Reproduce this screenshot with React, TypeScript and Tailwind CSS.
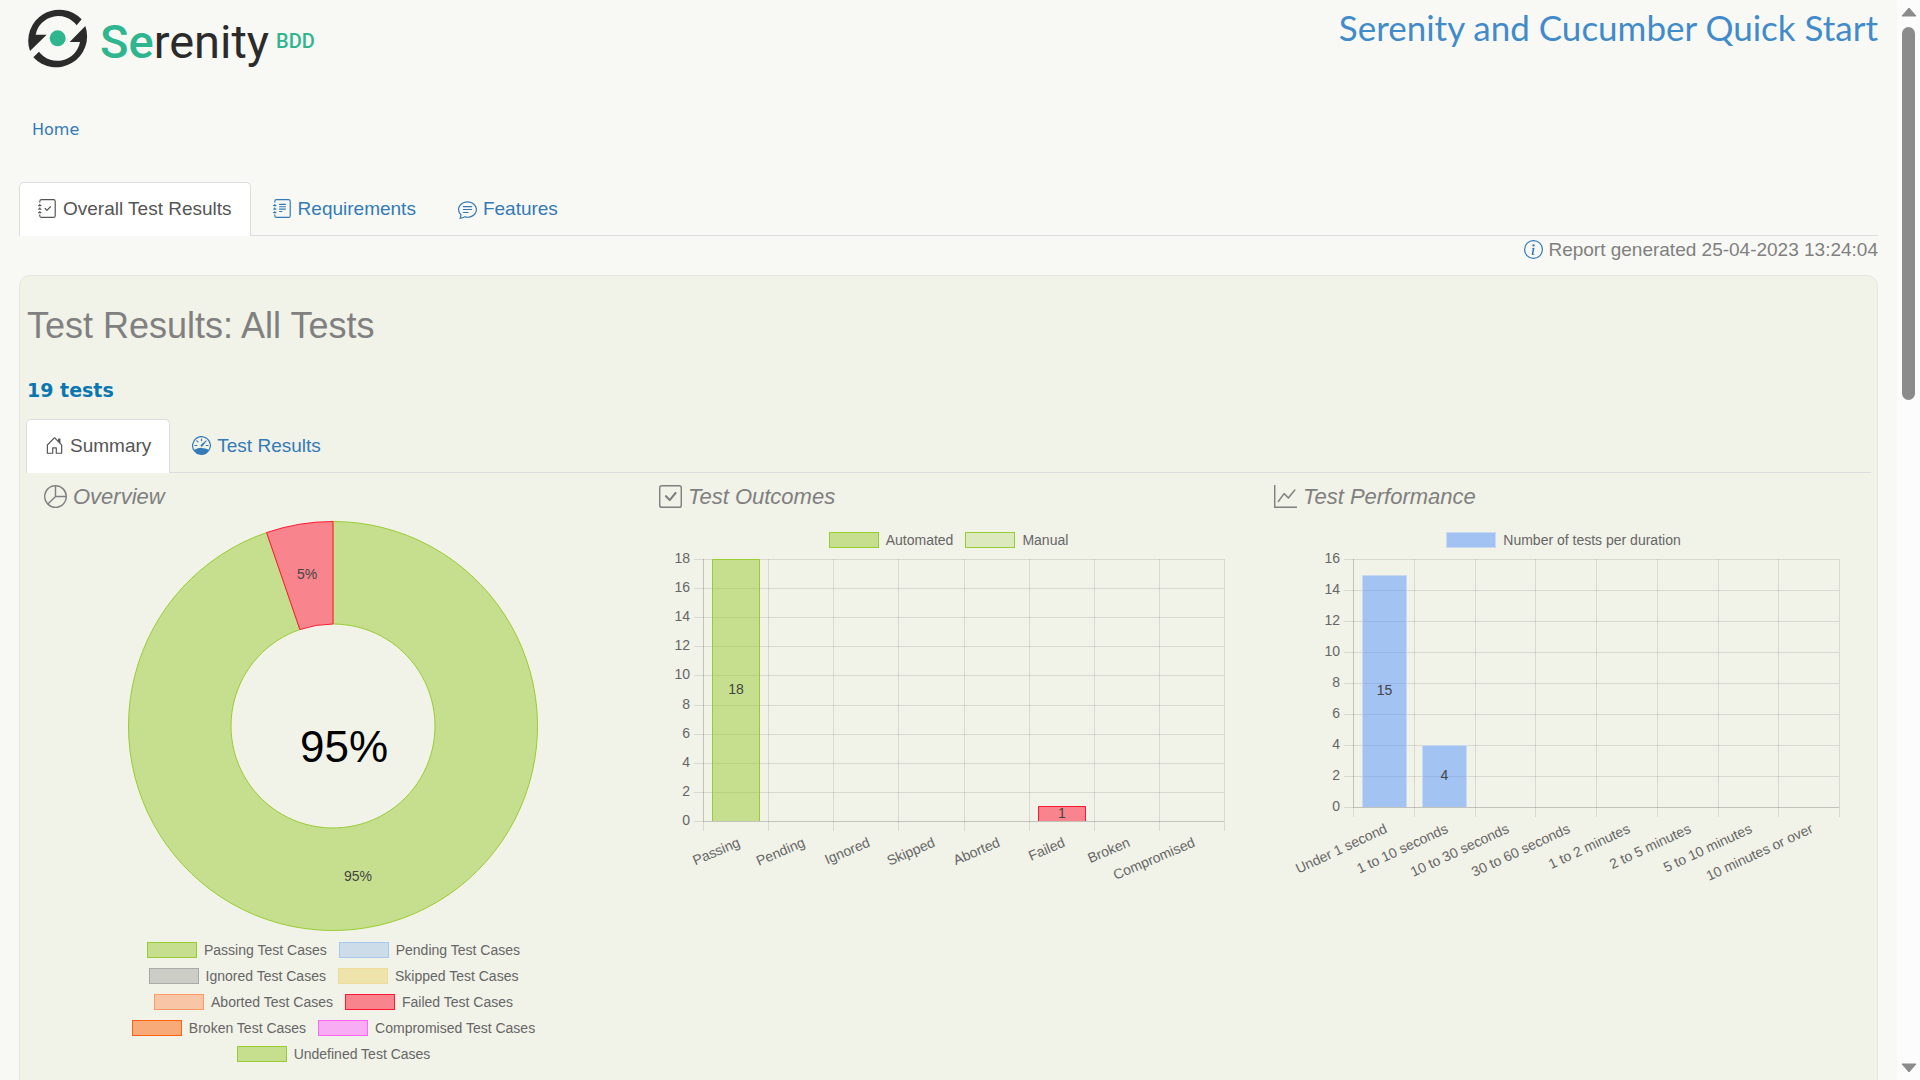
import type { ReactNode } from 'react';
import {
  BsJournalCheck,
  BsJournalText,
  BsChatText,
  BsInfoCircle,
  BsHouseDoor,
  BsSpeedometer,
  BsPieChart,
  BsCheckSquare,
  BsGraphUp,
} from 'react-icons/bs';

type Bar = { index: number; value: number; fill: string; stroke: string };

type BarChartProps = {
  label: string;
  left: number;
  right: number;
  max: number;
  bottom: number;
  height: number;
  angle: number;
  categories: string[];
  bars: Bar[];
};

const CHART_TOP = 10;

function BarChart({ label, left, right, max, bottom, height, angle, categories, bars }: BarChartProps) {
  const step = (right - left) / categories.length;
  const yOf = (value: number) => Math.round(bottom - ((bottom - CHART_TOP) * value) / max);
  const ticks = Array.from({ length: max / 2 + 1 }, (_, i) => i * 2);
  const barWidth = step * 0.72;
  return (
    <svg viewBox={`0 0 579 ${height}`} className="block w-full overflow-visible" role="img" aria-label={label}>
      <g strokeWidth="1" stroke="#000" strokeOpacity="0.1" shapeRendering="crispEdges">
        {ticks.map((t) => (
          <line key={t} x1={left - 9} x2={right} y1={yOf(t) + 0.5} y2={yOf(t) + 0.5} />
        ))}
        {Array.from({ length: categories.length + 1 }, (_, i) => {
          const x = Math.round(left + i * step) + 0.5;
          return <line key={i} x1={x} x2={x} y1={CHART_TOP} y2={bottom + 10} />;
        })}
        <line x1={left + 0.5} x2={left + 0.5} y1={CHART_TOP} y2={bottom} />
        <line x1={left} x2={right} y1={bottom + 0.5} y2={bottom + 0.5} />
      </g>
      <g fontSize="14" fill="#666">
        {ticks.map((t) => (
          <text key={t} x={left - 13} y={yOf(t) + 4} textAnchor="end">
            {t}
          </text>
        ))}
        {categories.map((c, i) => {
          const x = Math.round(left + (i + 0.5) * step) + 5;
          const y = bottom + 25;
          return (
            <text key={c} x={x} y={y} textAnchor="end" transform={`rotate(${-angle} ${x} ${y})`}>
              {c}
            </text>
          );
        })}
      </g>
      {bars.map((b) => {
        const x = Math.round(left + b.index * step + step * 0.14) + 0.5;
        const y = yOf(b.value) + 0.5;
        const w = Math.round(barWidth);
        return (
          <g key={b.index}>
            <rect x={x} y={y} width={w} height={bottom - y} fill={b.fill} fillOpacity="0.5" />
            <path d={`M${x} ${bottom}V${y}h${w}V${bottom}`} fill="none" stroke={b.stroke} />
            <text x={x + w / 2} y={(y + bottom) / 2 + 4} fontSize="14" fill="#444" textAnchor="middle">
              {b.value}
            </text>
          </g>
        );
      })}
    </svg>
  );
}

function Donut() {
  const cx = 289;
  const cy = 205;
  const R = 204.5;
  const r = 102;
  const a = (Math.PI * 2) / 19;
  const ox = cx - R * Math.sin(a);
  const oy = cy - R * Math.cos(a);
  const ix = cx - r * Math.sin(a);
  const iy = cy - r * Math.cos(a);
  return (
    <svg viewBox="0 0 579 411" className="block w-full" role="img" aria-label="Overview of test results">
      <path
        d={`M${cx} ${cy - R}A${R} ${R} 0 1 1 ${ox} ${oy}L${ix} ${iy}A${r} ${r} 0 1 0 ${cx} ${cy - r}Z`}
        fill="#c6df8e"
        stroke="#99cc33"
      />
      <path
        d={`M${ox} ${oy}A${R} ${R} 0 0 1 ${cx} ${cy - R}V${cy - r}A${r} ${r} 0 0 0 ${ix} ${iy}Z`}
        fill="#f8858d"
        stroke="#ff1631"
      />
      <g fontSize="14" fill="#444" textAnchor="middle">
        <text x="263" y="58">5%</text>
        <text x="314" y="360">95%</text>
      </g>
      <text x="300" y="241" fontSize="44" textAnchor="middle">95%</text>
    </svg>
  );
}

function LegendItem({ swatch, children }: { swatch: string; children: ReactNode }) {
  return (
    <li className="flex items-center gap-[7px]">
      <span className={`h-4 w-[50px] border ${swatch}`} />
      {children}
    </li>
  );
}

const overviewLegend: { name: string; swatch: string }[][] = [
  [
    { name: 'Passing', swatch: 'border-[#99cc33] bg-[#c6df8e]' },
    { name: 'Pending', swatch: 'border-[#a8c9f0] bg-[#ccdde9]' },
  ],
  [
    { name: 'Ignored', swatch: 'border-[#a8a8a8] bg-[#cccdc7]' },
    { name: 'Skipped', swatch: 'border-[#eedc9a] bg-[#eee4ab]' },
  ],
  [
    { name: 'Aborted', swatch: 'border-[#ff9966] bg-[#f8c5a7]' },
    { name: 'Failed', swatch: 'border-[#ff1631] bg-[#f8858d]' },
  ],
  [
    { name: 'Broken', swatch: 'border-[#ff6210] bg-[#f8aa79]' },
    { name: 'Compromised', swatch: 'border-[#ff66ff] bg-[#f8acf3]' },
  ],
  [{ name: 'Undefined', swatch: 'border-[#99cc33] bg-[#c6df8e]' }],
];

function Tab({ icon, active, children }: { icon: ReactNode; active?: boolean; children: ReactNode }) {
  return (
    <button
      role="tab"
      aria-selected={!!active}
      className={
        active
          ? '-mb-px flex h-[54px] items-center gap-[6px] rounded-t-[5px] border border-b-0 border-[#ddd] bg-white px-[18px] text-[#555]'
          : '-mb-px flex h-[54px] items-center gap-[6px] px-[20px] text-[#337ab7]'
      }
    >
      {icon}
      {children}
    </button>
  );
}

function SectionTitle({ icon, children }: { icon: ReactNode; children: ReactNode }) {
  return (
    <h3 className="flex h-[46px] items-center gap-[6px] text-[22px] text-[#808080] italic">
      {icon}
      {children}
    </h3>
  );
}

function Logo() {
  return (
    <a href="#" aria-label="Serenity BDD" className="flex items-start pt-[6px]">
      <svg viewBox="15 18 195 195" className="size-[65px]" aria-hidden="true">
        <path d="M185 58A93 93 0 0 0 30 153L80 104H47A69 69 0 0 1 170 76Z" fill="#2b2b2b" />
        <path d="M40 172A93 93 0 0 0 196 78L149 126H180A69 69 0 0 1 57 155Z" fill="#2b2b2b" />
        <circle cx="113" cy="115" r="24" fill="#30b68f" />
      </svg>
      <span className="ml-[10px] pt-2 font-['Roboto'] text-[47px] leading-[56px] text-[#2b2b2b]">
        <span className="font-medium text-[#30b68f]">Se</span>renity
      </span>
      <span className="ml-[7px] pt-[23px] font-['Roboto'] text-[20px] leading-6 font-medium text-[#30b68f]">BDD</span>
    </a>
  );
}

export default function App() {
  return (
    <div className="flex h-screen overflow-hidden bg-[#f8f9f4] font-['Liberation_Sans',Arial,sans-serif]">
      <main className="min-w-0 flex-1 overflow-hidden px-[19px]">
        <header className="flex h-[104px] justify-between pl-[6px]">
          <Logo />
          <h1 className="pt-[5px] font-['Lato'] text-[35px] leading-[44px] text-[#428bca]">
            Serenity and Cucumber Quick Start
          </h1>
        </header>
        <nav aria-label="Breadcrumb" className="flex h-[50px] items-center pt-[2px] pl-[13px] font-['DejaVu_Sans'] text-[16px]">
          <a href="#" className="text-[#337ab7]">
            Home
          </a>
        </nav>
        <div role="tablist" className="mt-7 flex gap-[2px] border-b border-[#ddd] text-[19px]">
          <Tab active icon={<BsJournalCheck className="mb-[2px] size-[19px]" />}>
            Overall Test Results
          </Tab>
          <Tab icon={<BsJournalText className="mb-[2px] size-[19px]" />}>Requirements</Tab>
          <Tab icon={<BsChatText className="size-[19px]" />}>Features</Tab>
        </div>
        <p className="flex h-[39px] items-start justify-end gap-[5px] pt-[2px] text-[19px] leading-6 text-[#808080]">
          <BsInfoCircle className="mt-[2px] size-[19px] text-[#337ab7]" />
          Report generated 25-04-2023 13:24:04
        </p>
        <section className="min-h-[900px] rounded-[11px] border border-[#e6e7de] bg-[#f1f2e8] px-[6px] pt-[29px]">
          <h2 className="pl-px text-[36px] leading-[42px] text-[#808080]">Test Results: All Tests</h2>
          <p className="mt-[31px] pl-px font-['DejaVu_Sans'] text-[19px] leading-6 font-bold text-[#0a77b0]">
            19 tests
          </p>
          <div role="tablist" className="mt-[17px] flex gap-[2px] border-b border-[#ddd] text-[19px]">
            <Tab active icon={<BsHouseDoor className="mb-[2px] size-[19px]" />}>
              Summary
            </Tab>
            <Tab icon={<BsSpeedometer className="mb-[2px] size-[19px]" />}>Test Results</Tab>
          </div>
          <div className="grid grid-cols-3">
            <article className="px-[18px]">
              <SectionTitle icon={<BsPieChart className="size-[23px]" />}>Overview</SectionTitle>
              <div className="mt-[2px]">
                <Donut />
              </div>
              <div className="flex flex-col gap-[2px] pt-[6px] text-[14px] leading-6 text-[#666]">
                {overviewLegend.map((row) => (
                  <ul key={row[0].name} className="flex justify-center gap-3">
                    {row.map((item) => (
                      <LegendItem key={item.name} swatch={item.swatch}>
                        {item.name} Test Cases
                      </LegendItem>
                    ))}
                  </ul>
                ))}
              </div>
            </article>
            <article className="px-[18px]">
              <SectionTitle icon={<BsCheckSquare className="size-[23px]" />}>Test Outcomes</SectionTitle>
              <ul className="mt-[12px] flex justify-center gap-3 text-[14px] leading-[18px] text-[#666]">
                <LegendItem swatch="border-[#99cc33] bg-[#c6df8e]">Automated</LegendItem>
                <LegendItem swatch="border-[#99cc33] bg-[#dce9bc]">Manual</LegendItem>
              </ul>
              <BarChart
                label="Test outcomes"
                left={44}
                right={565}
                max={18}
                bottom={272}
                height={340}
                angle={23}
                categories={['Passing', 'Pending', 'Ignored', 'Skipped', 'Aborted', 'Failed', 'Broken', 'Compromised']}
                bars={[
                  { index: 0, value: 18, fill: '#99cc33', stroke: '#99cc33' },
                  { index: 5, value: 1, fill: '#ff1631', stroke: '#ff1631' },
                ]}
              />
            </article>
            <article className="px-[18px]">
              <SectionTitle icon={<BsGraphUp className="size-[23px]" />}>Test Performance</SectionTitle>
              <ul className="mt-[12px] flex justify-center gap-3 text-[14px] leading-[18px] text-[#666]">
                <LegendItem swatch="border-[#c9daf0] bg-[#a2c2f3]">Number of tests per duration</LegendItem>
              </ul>
              <BarChart
                label="Number of tests per duration"
                left={79}
                right={565}
                max={16}
                bottom={258}
                height={340}
                angle={25}
                categories={[
                  'Under 1 second',
                  '1 to 10 seconds',
                  '10 to 30 seconds',
                  '30 to 60 seconds',
                  '1 to 2 minutes',
                  '2 to 5 minutes',
                  '5 to 10 minutes',
                  '10 minutes or over',
                ]}
                bars={[
                  { index: 0, value: 15, fill: '#5594fe', stroke: '#c9daf0' },
                  { index: 1, value: 4, fill: '#5594fe', stroke: '#c9daf0' },
                ]}
              />
            </article>
          </div>
        </section>
      </main>
      <div aria-hidden="true" className="flex w-[23px] flex-col items-center justify-between bg-[#fcfcfc] py-[7px]">
        <svg viewBox="0 0 16 10" className="h-[10px] w-4">
          <path d="M8 1L15 9H1Z" fill="#8b8b8b" stroke="#8b8b8b" strokeLinejoin="round" />
        </svg>
        <div className="mt-[10px] flex w-full flex-1 justify-center">
          <div className="h-[36%] w-[13px] rounded-full bg-[#8b8b8b]" />
        </div>
        <svg viewBox="0 0 16 10" className="h-[10px] w-4">
          <path d="M8 9L1 1H15Z" fill="#8b8b8b" stroke="#8b8b8b" strokeLinejoin="round" />
        </svg>
      </div>
    </div>
  );
}
